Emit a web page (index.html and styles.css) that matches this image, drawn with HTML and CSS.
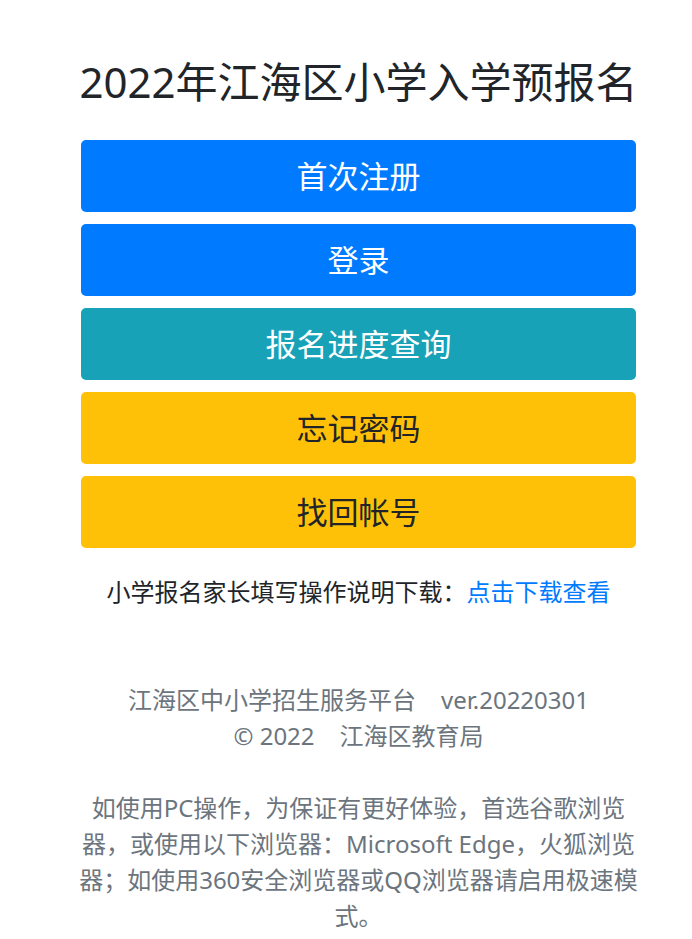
FILE: index.html
```html
<!DOCTYPE html>
<html lang="zh-CN">
<head>
<meta charset="utf-8">
<title>2022年江海区小学入学预报名</title>
<link rel="stylesheet" href="styles.css">
</head>
<body>
<main class="page">
  <h1 class="title">2022年江海区小学入学预报名</h1>
  <nav class="actions">
    <a class="btn btn-primary" href="#">首次注册</a>
    <a class="btn btn-primary" href="#">登录</a>
    <a class="btn btn-info" href="#">报名进度查询</a>
    <a class="btn btn-warning" href="#">忘记密码</a>
    <a class="btn btn-warning" href="#">找回帐号</a>
  </nav>
  <p class="guide">小学报名家长填写操作说明下载：<a class="link" href="#">点击下载查看</a></p>
  <footer class="footer">
    <div>江海区中小学招生服务平台&nbsp;&nbsp;&nbsp;&nbsp;ver.20220301</div>
    <div>© 2022&nbsp;&nbsp;&nbsp;&nbsp;江海区教育局</div>
    <div class="blank">&nbsp;</div>
    <div>如使用PC操作，为保证有更好体验，首选谷歌浏览器，或使用以下浏览器：Microsoft Edge，火狐浏览器；如使用360安全浏览器或QQ浏览器请启用极速模式。</div>
  </footer>
</main>
</body>
</html>
```

FILE: styles.css
```css
html, body {
  margin: 0;
  padding: 0;
  background: #fff;
}
body {
  font-family: "Noto Sans", "Noto Sans CJK SC", sans-serif;
  color: #212529;
  font-size: 24px;
  line-height: 1.5;
}
.page {
  width: 555px;
  margin-left: 81px;
  padding-top: 57px;
}
.title {
  margin: 0 -20px;
  font-size: 42px;
  font-weight: 400;
  line-height: 50px;
  text-align: center;
  color: #212529;
  white-space: nowrap;
}
.actions {
  margin-top: 33px;
  display: flex;
  flex-direction: column;
  gap: 12px;
}
.btn {
  height: 72px;
  border-radius: 5px;
  display: flex;
  align-items: center;
  justify-content: center;
  font-size: 31px;
  text-decoration: none;
  color: #fff;
}
.btn-primary { background: #007bff; }
.btn-info { background: #17a2b8; }
.btn-warning { background: #ffc107; color: #212529; }
.guide {
  margin: 26px 0 0;
  text-align: center;
  line-height: 36px;
}
.link {
  color: #007bff;
  text-decoration: none;
}
.footer {
  margin: 72px -4px 0;
  text-align: center;
  color: #6c757d;
  line-height: 36px;
}
```
